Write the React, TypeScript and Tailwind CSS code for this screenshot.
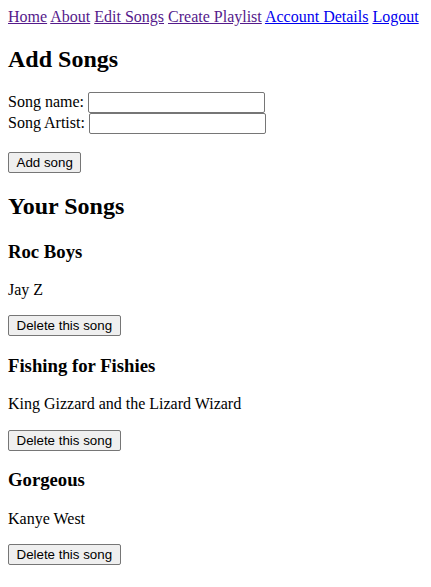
import React from "react";

const songs = [
  { id: 1, name: "Roc Boys", artist: "Jay Z" },
  { id: 2, name: "Fishing for Fishies", artist: "King Gizzard and the Lizard Wizard" },
  { id: 3, name: "Gorgeous", artist: "Kanye West" },
];

const navLinks = [
  { label: "Home", visited: true },
  { label: "About", visited: true },
  { label: "Edit Songs", visited: true },
  { label: "Create Playlist", visited: true },
  { label: "Account Details", visited: false },
  { label: "Logout", visited: false },
];

const btn =
  "bg-[#efefef] border border-[#767676] rounded-[2px] h-[21px] px-[7.5px] py-0 text-[13.33px] leading-[normal] text-black font-['Liberation_Sans',Arial,sans-serif] align-baseline";

const input =
  "w-[177px] h-[21px] border border-[#767676] rounded-[2px] px-[2px] text-[13.33px] font-['Liberation_Sans',Arial,sans-serif] bg-white align-baseline";

export default function App() {
  return (
    <div className="m-2 font-['Liberation_Serif','Times_New_Roman',serif] text-base leading-[1.15] text-black bg-white">
      {/* Nav */}
      <div>
        {navLinks.map((l, i) => (
          <React.Fragment key={l.label}>
            <a href="#" className={`underline ${l.visited ? "text-[#551a8b]" : "text-[#0000ee]"}`}>
              {l.label}
            </a>
            {i < navLinks.length - 1 && " "}
          </React.Fragment>
        ))}
      </div>

      {/* Add Songs */}
      <h2 className="text-2xl font-bold leading-[1.15] mt-[19.92px] mb-[18px]">Add Songs</h2>
      <form onSubmit={e => e.preventDefault()}>
        <label>Song name: </label>
        <input type="text" className={input} />
        <br />
        <label>Song Artist: </label>
        <input type="text" className={input} />
        <br />
        <br />
        <button className={btn}>Add song</button>
      </form>

      {/* Your Songs */}
      <h2 className="text-2xl font-bold leading-[1.15] mt-[19.92px] mb-[19.92px]">Your Songs</h2>
      {songs.map(song => (
        <div key={song.id}>
          <h3 className="text-[18.72px] font-bold leading-[1.15] my-[18.72px]">{song.name}</h3>
          <p className="my-4">{song.artist}</p>
          <button className={btn}>Delete this song</button>
        </div>
      ))}
    </div>
  );
}
